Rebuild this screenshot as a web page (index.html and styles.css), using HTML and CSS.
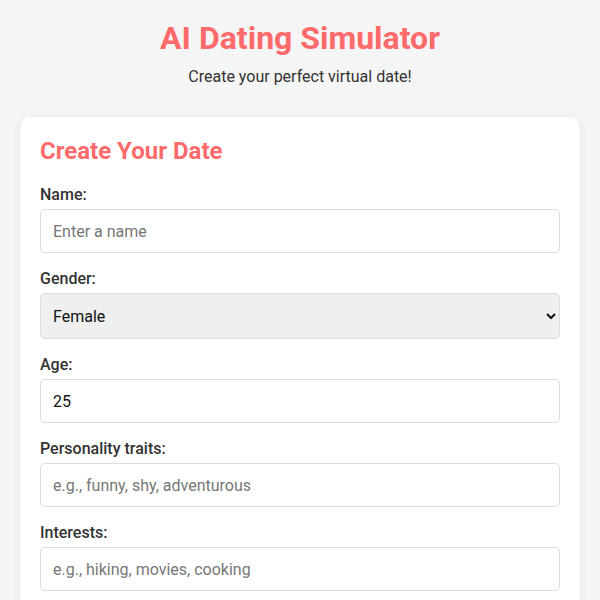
FILE: index.html
```html
<!DOCTYPE html>
<html lang="en">
<head>
<meta charset="utf-8">
<title>AI Dating Simulator</title>
<link rel="stylesheet" href="styles.css">
</head>
<body>
<div class="container">
  <header class="header">
    <h1 class="title">AI Dating Simulator</h1>
    <p class="subtitle">Create your perfect virtual date!</p>
  </header>
  <section class="card">
    <h2 class="card-title">Create Your Date</h2>
    <div class="field">
      <label class="label" for="name">Name:</label>
      <input class="input" id="name" type="text" placeholder="Enter a name">
    </div>
    <div class="field">
      <label class="label" for="gender">Gender:</label>
      <select class="input select" id="gender">
        <option>Female</option>
        <option>Male</option>
        <option>Non-binary</option>
      </select>
    </div>
    <div class="field">
      <label class="label" for="age">Age:</label>
      <input class="input" id="age" type="number" value="25">
    </div>
    <div class="field">
      <label class="label" for="traits">Personality traits:</label>
      <input class="input" id="traits" type="text" placeholder="e.g., funny, shy, adventurous">
    </div>
    <div class="field">
      <label class="label" for="interests">Interests:</label>
      <input class="input" id="interests" type="text" placeholder="e.g., hiking, movies, cooking">
    </div>
  </section>
</div>
</body>
</html>
```

FILE: styles.css
```css
* { box-sizing: border-box; }
html, body {
  margin: 0;
  padding: 0;
  background: #f5f5f5;
  font-family: Roboto, "Liberation Sans", sans-serif;
  color: #333;
}
.container {
  padding: 20px 20px 0;
}
.header {
  text-align: center;
}
.title {
  margin: 0;
  font-size: 32px;
  line-height: 37px;
  font-weight: 700;
  color: #ff6b6b;
}
.subtitle {
  margin: 10px 0 0;
  font-size: 16px;
  line-height: 19px;
  color: #333;
}
.card {
  margin-top: 31px;
  background: #fff;
  border-radius: 10px;
  box-shadow: 0 2px 10px rgba(0, 0, 0, 0.08);
  padding: 20px 20px 20px;
}
.card-title {
  margin: 0 0 20px;
  font-size: 24px;
  line-height: 28px;
  font-weight: 700;
  color: #ff6b6b;
}
.field {
  display: flex;
  flex-direction: column;
  margin-bottom: 16px;
}
.label {
  font-size: 16px;
  line-height: 19px;
  font-weight: 500;
  color: #333;
  margin-bottom: 5px;
}
.input {
  width: 100%;
  height: 44px;
  padding: 0 12px;
  font-family: Roboto, "Liberation Sans", sans-serif;
  font-size: 16px;
  color: #111;
  border: 1px solid #ddd;
  border-radius: 5px;
  background: #fff;
  outline: none;
}
.input::placeholder {
  color: #777;
}
.select {
  height: 46px;
  background: #efefef;
  padding: 0 8px;
}
```
